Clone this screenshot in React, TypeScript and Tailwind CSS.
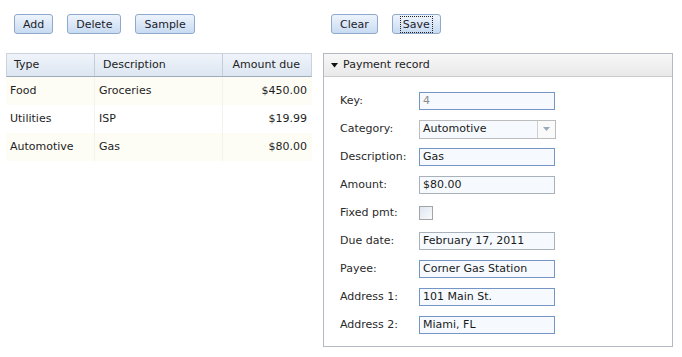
import React from 'react';

const font = { fontFamily: '"DejaVu Sans", Verdana, sans-serif' };

const Btn: React.FC<{ label: string; focused?: boolean }> = ({ label, focused }) => (
  <button
    className="h-[20px] px-[8px] rounded-[3px] border border-[#8fa9cc] bg-gradient-to-b from-[#eef4fc] to-[#c8dbf2] text-[11px] leading-none text-[#1c1c2c]"
  >
    <span className={focused ? 'px-[2px] py-[1px] outline outline-1 outline-dotted outline-[#222]' : ''}>{label}</span>
  </button>
);

const rows = [
  { type: 'Food', desc: 'Groceries', amt: '$450.00', bg: 'bg-[#fdfdf6]' },
  { type: 'Utilities', desc: 'ISP', amt: '$19.99', bg: 'bg-white' },
  { type: 'Automotive', desc: 'Gas', amt: '$80.00', bg: 'bg-[#fdfdf6]' },
];

const Field: React.FC<{ label: string; children: React.ReactNode }> = ({ label, children }) => (
  <div className="flex items-center h-[28px]">
    <div className="w-[79px] text-[11px] text-[#2a2a2a]">{label}</div>
    {children}
  </div>
);

const Input: React.FC<{ value: string; tone?: 'blue' | 'gray'; muted?: boolean }> = ({ value, tone = 'blue', muted }) => (
  <div
    className={`w-[136px] h-[18px] flex items-center px-[3px] bg-[#f6faff] border text-[11px] ${
      tone === 'blue' ? 'border-[#7596c4]' : 'border-[#a9b1bb]'
    } ${muted ? 'text-[#8c8c8c]' : 'text-[#1a1a1a]'}`}
  >
    {value}
  </div>
);

export default function App() {
  return (
    <div className="w-[682px] h-[357px] bg-white" style={font}>
      <div className="flex pt-[14px]">
        <div className="w-[331px] pl-[14px] flex gap-[14px]">
          <Btn label="Add" />
          <Btn label="Delete" />
          <Btn label="Sample" />
        </div>
        <div className="flex gap-[14px]">
          <Btn label="Clear" />
          <Btn label="Save" focused />
        </div>
      </div>

      <div className="flex mt-[19px]">
        <div className="ml-[6px] w-[306px]">
          <div className="flex h-[24px] border border-[#c9d3de] border-b-[#9eabbb] bg-gradient-to-b from-[#f0f4fa] to-[#dce6f1] text-[11px] text-[#222]">
            <div className="w-[88px] pl-[7px] flex items-center border-r border-[#c3cedb]">Type</div>
            <div className="w-[128px] pl-[8px] flex items-center border-r border-[#c3cedb]">Description</div>
            <div className="flex-1 pr-[11px] flex items-center justify-end">Amount due</div>
          </div>
          {rows.map((r) => (
            <div key={r.type} className={`flex h-[28px] text-[11px] text-[#1e1e1e] ${r.bg}`}>
              <div className="w-[89px] pl-[4px] flex items-center border-r border-[#f3f3ec]">{r.type}</div>
              <div className="w-[128px] pl-[4px] flex items-center border-r border-[#f3f3ec]">{r.desc}</div>
              <div className="flex-1 pr-[5px] flex items-center justify-end">{r.amt}</div>
            </div>
          ))}
        </div>

        <div className="ml-[11px] w-[350px] h-[294px] border border-[#b4bac4]">
          <div className="h-[23px] flex items-center pl-[7px] bg-gradient-to-b from-[#f7f7f7] to-[#e9e9e9] border-b border-[#cbcbcb] text-[11px] text-[#222]">
            <svg width="7" height="5" viewBox="0 0 7 5" className="mr-[5px]">
              <path d="M0 0 L7 0 L3.5 4.5 Z" fill="#111" />
            </svg>
            Payment record
          </div>
          <div className="pl-[16px] pt-[10px]">
            <Field label="Key:">
              <Input value="4" muted />
            </Field>
            <Field label="Category:">
              <div className="w-[137px] h-[19px] flex border border-[#bcbcbc] bg-[#f6faff] text-[11px] text-[#1a1a1a]">
                <div className="flex-1 flex items-center px-[3px]">Automotive</div>
                <div className="w-[18px] border-l border-[#cfcfcf] bg-[#fafafa] flex items-center justify-center">
                  <svg width="7" height="4" viewBox="0 0 7 4">
                    <path d="M0 0 L7 0 L3.5 4 Z" fill="#9aa9bb" />
                  </svg>
                </div>
              </div>
            </Field>
            <Field label="Description:">
              <Input value="Gas" />
            </Field>
            <Field label="Amount:">
              <Input value="$80.00" tone="gray" />
            </Field>
            <Field label="Fixed pmt:">
              <div className="w-[14px] h-[14px] border border-[#a4a4a4] bg-gradient-to-br from-[#dfe7f1] to-[#f8fafc]" />
            </Field>
            <Field label="Due date:">
              <Input value="February 17, 2011" tone="gray" />
            </Field>
            <Field label="Payee:">
              <Input value="Corner Gas Station" />
            </Field>
            <Field label="Address 1:">
              <Input value="101 Main St." />
            </Field>
            <Field label="Address 2:">
              <Input value="Miami, FL" />
            </Field>
          </div>
        </div>
      </div>
    </div>
  );
}
